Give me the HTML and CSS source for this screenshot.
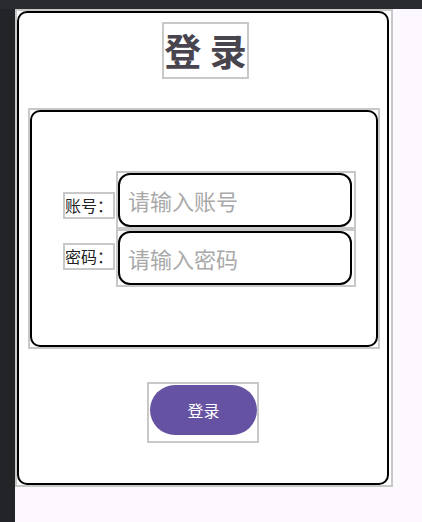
FILE: index.html
```html
<!DOCTYPE html>
<html lang="zh">
<head>
<meta charset="utf-8">
<title>登录</title>
<link rel="stylesheet" href="styles.css">
</head>
<body>
<div class="topbar"></div>
<div class="main">
  <div class="leftbar"></div>
  <div class="content">
    <div class="page">
      <div class="card">
        <div class="title">登 录</div>
        <div class="form-outer">
          <div class="form-card">
            <div class="form">
              <div class="row">
                <div class="label label-user">账号：</div>
                <div class="field">
                  <input class="input" type="text" placeholder="请输入账号">
                </div>
              </div>
              <div class="row">
                <div class="label label-pass">密码：</div>
                <div class="field">
                  <input class="input" type="password" placeholder="请输入密码">
                </div>
              </div>
            </div>
          </div>
        </div>
        <div class="btn-wrap">
          <button class="btn">登录</button>
        </div>
      </div>
    </div>
  </div>
</div>
</body>
</html>
```
FILE: styles.css
```css
* { box-sizing: border-box; }
html, body {
  margin: 0;
  padding: 0;
}
body {
  background: #fcf8fe;
  font-family: "Noto Sans CJK SC", "Noto Sans", sans-serif;
  width: 422px;
  height: 522px;
  overflow: hidden;
}
.topbar {
  height: 9px;
  background: #2a2b30;
}
.main {
  display: flex;
  height: 513px;
}
.leftbar {
  width: 15px;
  background: #232428;
}
.content {
  flex: 1;
}
.page {
  width: 378px;
  height: 478px;
  border: 2px solid #c8c8c8;
  background: #ffffff;
}
.card {
  width: 372px;
  height: 474px;
  border: 2px solid #000;
  border-radius: 10px;
  background: #fff;
  display: flex;
  flex-direction: column;
  align-items: center;
}
.title {
  margin-top: 9px;
  margin-left: 5px;
  border: 2px solid #c8c8c8;
  font-size: 37px;
  line-height: 53px;
  font-weight: 700;
  color: #48454f;
  padding: 0;
}
.form-outer {
  margin-top: 29px;
  align-self: flex-start;
  margin-left: 9px;
  width: 352px;
  height: 241px;
  border: 2px solid #c8c8c8;
}
.form-card {
  height: 100%;
  border: 2px solid #000;
  border-radius: 10px;
  display: flex;
  flex-direction: column;
  justify-content: center;
  padding-left: 31px;
}
.form {
  display: flex;
  flex-direction: column;
}
.row {
  display: flex;
  align-items: flex-start;
}
.label {
  width: 52px;
  border: 2px solid #c8c8c8;
  font-size: 16px;
  line-height: 23px;
  color: #222;
  white-space: nowrap;
  margin-right: 1px;
}
.label-user { margin-top: 21px; }
.label-pass { margin-top: 14px; }
.field {
  width: 240px;
  height: 58px;
  border: 2px solid #c8c8c8;
  padding-right: 2px;
}
.input {
  display: block;
  width: 100%;
  height: 100%;
  border: 2px solid #000;
  border-radius: 12px;
  padding: 0 0 0 8px;
  margin: 0;
  font-family: "Noto Sans CJK SC", "Noto Sans", sans-serif;
  font-size: 22px;
  color: #333;
  background: #fff;
  outline: none;
}
.input::placeholder {
  color: #a9a9a9;
}
.btn-wrap {
  margin-top: 33px;
  width: 112px;
  height: 61px;
  border: 2px solid #c8c8c8;
  padding: 1px 0 0 1px;
}
.btn {
  display: block;
  width: 107px;
  height: 50px;
  border: none;
  border-radius: 25px;
  background: #6552a2;
  color: #fff;
  font-family: "Noto Sans CJK SC", "Noto Sans", sans-serif;
  font-size: 16px;
  padding: 0;
  margin: 0;
}
```
